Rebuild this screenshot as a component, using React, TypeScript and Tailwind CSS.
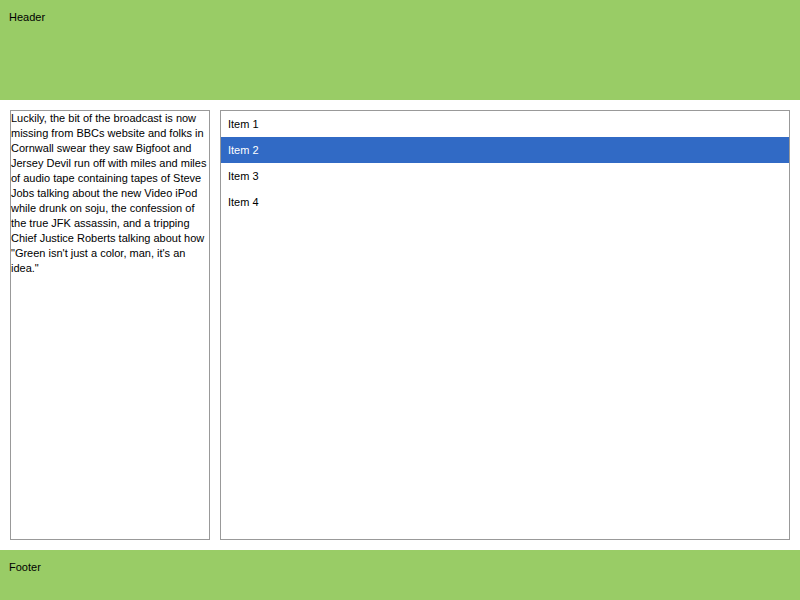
export default function App() {
  const items = ['Item 1', 'Item 2', 'Item 3', 'Item 4'];
  const selected = 1;

  return (
    <div className="w-[800px] h-[600px] flex flex-col bg-white text-black text-[11px] leading-[15px] font-['Liberation_Sans',Arial,sans-serif]">
      <header className="h-[100px] bg-[#99cc66] px-[9px] pt-[10px]">Header</header>

      <main className="flex-1 flex gap-[10px] p-[10px]">
        <div className="w-[200px] border border-[#999999]">
          Luckily, the bit of the broadcast is now missing from BBCs website and folks in Cornwall swear they saw
          Bigfoot and Jersey Devil run off with miles and miles of audio tape containing tapes of Steve Jobs talking
          about the new Video iPod while drunk on soju, the confession of the true JFK assassin, and a tripping Chief
          Justice Roberts talking about how "Green isn't just a color, man, it's an idea."
        </div>

        <ul className="flex-1 border border-[#999999]">
          {items.map((item, i) => (
            <li
              key={item}
              className={`h-[26px] flex items-center px-[7px] ${i === selected ? 'bg-[#316ac5] text-white' : ''}`}
            >
              {item}
            </li>
          ))}
        </ul>
      </main>

      <footer className="h-[50px] bg-[#99cc66] px-[9px] pt-[10px]">Footer</footer>
    </div>
  );
}
